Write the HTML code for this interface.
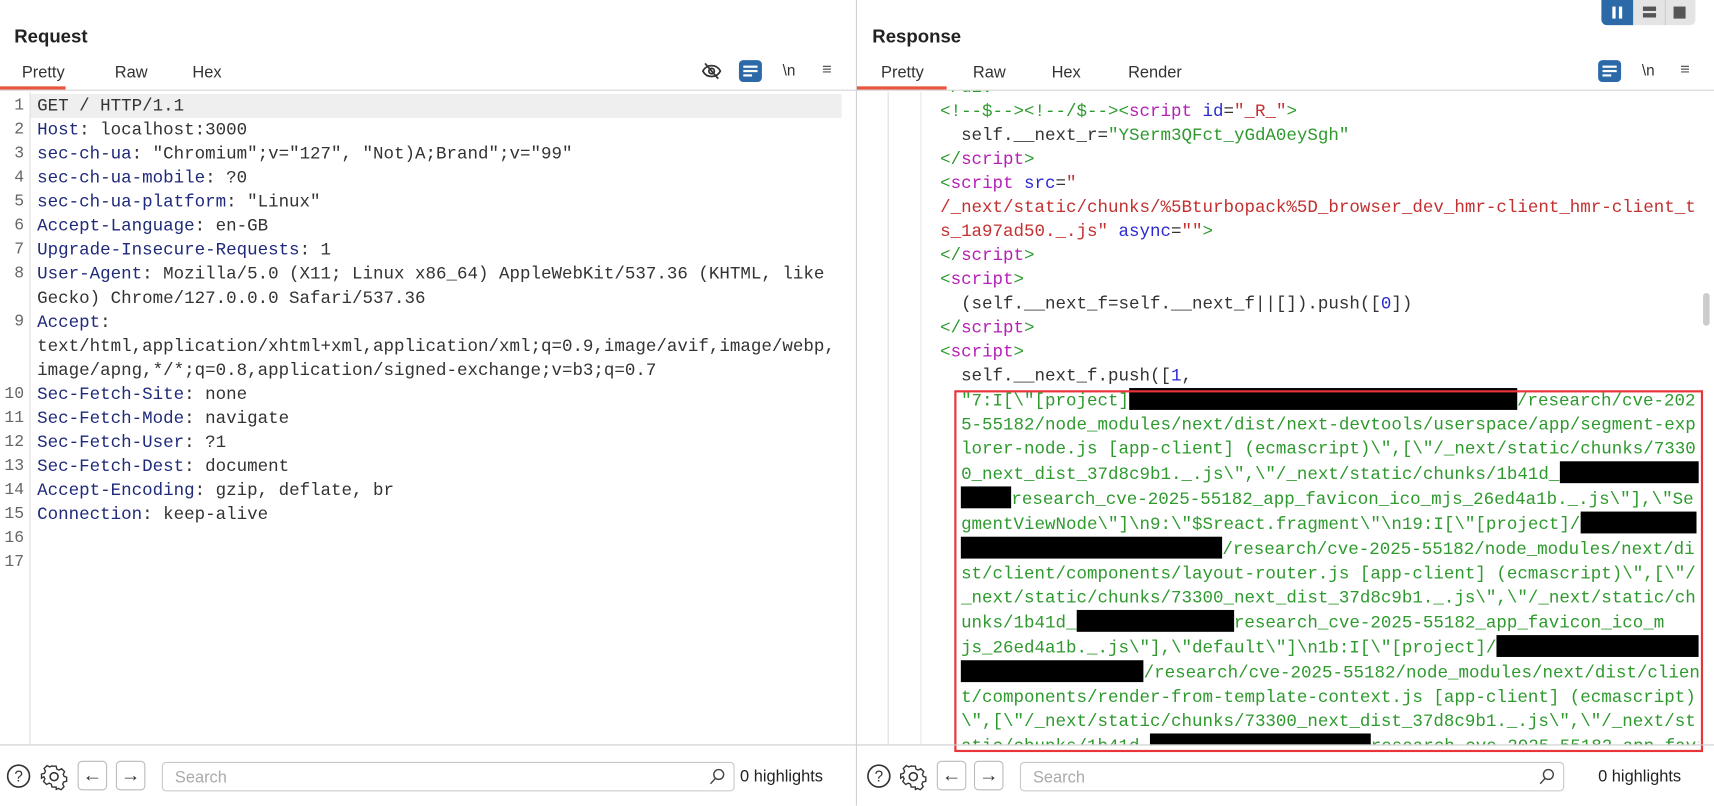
<!DOCTYPE html>
<html><head><meta charset="utf-8"><style>
*{margin:0;padding:0;box-sizing:border-box}
html,body{width:1714px;height:806px;overflow:hidden;background:#fff}
#w{width:1568px;height:737px;position:relative;transform:scale(1.09311);transform-origin:0 0;font-family:"Liberation Sans",sans-serif;color:#222}
.abs{position:absolute}
.mono{font-family:"Liberation Mono",monospace;font-size:16px;white-space:pre;line-height:22px;color:#333}
.k{color:#1f2a7a}
.g{color:#2e9a2e}
.p{color:#b51fb5}
.b{color:#2a2ad0}
.r{color:#c23030}
.x{display:inline-block;background:#000;height:20px;vertical-align:-4px}
.title{font-size:17px;font-weight:bold;color:#222}
.tab{font-size:15px;color:#333}
.ln{position:absolute;left:0;width:22px;text-align:right;font-family:"Liberation Mono",monospace;font-size:15px;color:#666;line-height:22px}
.sbox{position:absolute;height:27px;border:1px solid #c8c8c8;border-radius:4px;font-size:15px;color:#aaa;padding:5px 11px}
.nb{position:absolute;width:27px;height:27px;border:1px solid #bbb;border-radius:4px;font-size:18px;text-align:center;line-height:24px;color:#333}
</style></head><body><div id="w">

<div class="abs" style="left:783px;top:0;width:1px;height:737px;background:#d0d0d0"></div>

<!-- LEFT -->
<div class="abs title" style="left:13px;top:24px">Request</div>
<div class="abs tab" style="left:20px;top:58px">Pretty</div>
<div class="abs tab" style="left:105px;top:58px">Raw</div>
<div class="abs tab" style="left:176px;top:58px">Hex</div>
<div class="abs" style="left:0;top:79px;width:60px;height:3px;background:#e8553e"></div>
<div class="abs" style="left:0;top:82px;width:783px;height:1px;background:#d5d5d5"></div>
<svg class="abs" style="left:642px;top:56px" width="18" height="18" viewBox="0 0 18 18"><path d="M1 9c2-4 5-5 8-5s6 1 8 5c-2 4-5 5-8 5s-6-1-8-5z" fill="none" stroke="#333" stroke-width="1.6"/><circle cx="9" cy="9" r="2.5" fill="none" stroke="#333" stroke-width="1.6"/><path d="M3 2l12 14" stroke="#333" stroke-width="1.6"/></svg>
<div class="abs" style="left:676px;top:55px;width:21px;height:20px;background:#2c69a8;border-radius:4px"><div style="position:absolute;left:4px;top:5px;width:13px;height:2px;background:#fff"></div><div style="position:absolute;left:4px;top:9px;width:13px;height:2px;background:#fff"></div><div style="position:absolute;left:4px;top:13px;width:8px;height:2px;background:#fff"></div></div>
<div class="abs" style="left:716px;top:56px;font-size:14px;color:#333">\n</div>
<div class="abs" style="left:752px;top:55px;font-size:15px;color:#555">&#8801;</div>

<div class="abs" style="left:27px;top:84px;width:1px;height:597px;background:#ddd"></div>
<div class="abs" style="left:28px;top:86px;width:742px;height:22px;background:#efefef"></div>
<div class="abs" style="left:0;top:86px;width:22px">
<div class="ln" style="top:0">1</div><div class="ln" style="top:22px">2</div><div class="ln" style="top:44px">3</div><div class="ln" style="top:66px">4</div><div class="ln" style="top:88px">5</div><div class="ln" style="top:110px">6</div><div class="ln" style="top:132px">7</div><div class="ln" style="top:154px">8</div><div class="ln" style="top:198px">9</div><div class="ln" style="top:264px">10</div><div class="ln" style="top:286px">11</div><div class="ln" style="top:308px">12</div><div class="ln" style="top:330px">13</div><div class="ln" style="top:352px">14</div><div class="ln" style="top:374px">15</div><div class="ln" style="top:396px">16</div><div class="ln" style="top:418px">17</div>
</div>
<div class="abs mono" style="left:34px;top:86px">GET / HTTP/1.1
<span class="k">Host</span>: localhost:3000
<span class="k">sec-ch-ua</span>: "Chromium";v="127", "Not)A;Brand";v="99"
<span class="k">sec-ch-ua-mobile</span>: ?0
<span class="k">sec-ch-ua-platform</span>: "Linux"
<span class="k">Accept-Language</span>: en-GB
<span class="k">Upgrade-Insecure-Requests</span>: 1
<span class="k">User-Agent</span>: Mozilla/5.0 (X11; Linux x86_64) AppleWebKit/537.36 (KHTML, like
Gecko) Chrome/127.0.0.0 Safari/537.36
<span class="k">Accept</span>:
text/html,application/xhtml+xml,application/xml;q=0.9,image/avif,image/webp,
image/apng,*/*;q=0.8,application/signed-exchange;v=b3;q=0.7
<span class="k">Sec-Fetch-Site</span>: none
<span class="k">Sec-Fetch-Mode</span>: navigate
<span class="k">Sec-Fetch-User</span>: ?1
<span class="k">Sec-Fetch-Dest</span>: document
<span class="k">Accept-Encoding</span>: gzip, deflate, br
<span class="k">Connection</span>: keep-alive</div>

<div class="abs" style="left:0;top:681px;width:783px;height:1px;background:#ccc"></div>
<svg class="abs" style="left:5px;top:698px" width="24" height="24" viewBox="0 0 24 24"><circle cx="12" cy="12" r="10" fill="none" stroke="#333" stroke-width="1.5"/><text x="12" y="17" font-size="14" text-anchor="middle" font-family="Liberation Sans" fill="#333">?</text></svg>
<svg class="abs" style="left:37px;top:698px" width="25" height="25" viewBox="0 0 24 24"><path d="M10 2h4l.6 2.8 2 1 2.6-1.3 2.8 2.8-1.3 2.6 1 2 2.3.6v4l-2.8.6-1 2 1.3 2.6-2.8 2.8-2.6-1.3-2 1L14 22h-4l-.6-2.8-2-1-2.6 1.3-2.8-2.8 1.3-2.6-1-2L0 13.5v-4l2.8-.6 1-2L2.5 4.3 5.3 1.5l2.6 1.3 2-1z" fill="none" stroke="#333" stroke-width="1.3" transform="scale(.92) translate(1 1)"/><circle cx="12" cy="12" r="3.5" fill="none" stroke="#333" stroke-width="1.4"/></svg>
<div class="nb" style="left:71px;top:696px">&#8592;</div>
<div class="nb" style="left:106px;top:696px">&#8594;</div>
<div class="sbox" style="left:148px;top:697px;width:524px">Search</div>
<svg class="abs" style="left:648px;top:702px" width="16" height="16" viewBox="0 0 16 16"><circle cx="9.5" cy="6.5" r="4.5" fill="none" stroke="#444" stroke-width="1.3"/><path d="M6.5 10L2 15" stroke="#444" stroke-width="1.3"/></svg>
<div class="abs" style="left:677px;top:702px;font-size:15px;color:#222">0 highlights</div>

<!-- RIGHT -->
<div class="abs" style="left:1465px;top:0;width:86px;height:23px;background:#e4e4e4;border-radius:0 0 5px 5px"></div>
<div class="abs" style="left:1465px;top:0;width:29px;height:23px;background:#2c69a8;border-radius:0 0 0 5px"><div style="position:absolute;left:10px;top:6px;width:3px;height:11px;background:#fff"></div><div style="position:absolute;left:16px;top:6px;width:3px;height:11px;background:#fff"></div></div>
<div class="abs" style="left:1503px;top:6px;width:12px;height:4px;background:#555"></div><div class="abs" style="left:1503px;top:12px;width:12px;height:4px;background:#555"></div>
<div class="abs" style="left:1523px;top:0;width:1px;height:23px;background:#ccc"></div>
<div class="abs" style="left:1531px;top:6px;width:11px;height:11px;background:#555"></div>

<div class="abs title" style="left:798px;top:24px">Response</div>
<div class="abs tab" style="left:806px;top:58px">Pretty</div>
<div class="abs tab" style="left:890px;top:58px">Raw</div>
<div class="abs tab" style="left:962px;top:58px">Hex</div>
<div class="abs tab" style="left:1032px;top:58px">Render</div>
<div class="abs" style="left:784px;top:79px;width:82px;height:3px;background:#e8553e"></div>
<div class="abs" style="left:784px;top:82px;width:784px;height:1px;background:#d5d5d5"></div>
<div class="abs" style="left:1462px;top:55px;width:21px;height:20px;background:#2c69a8;border-radius:4px"><div style="position:absolute;left:4px;top:5px;width:13px;height:2px;background:#fff"></div><div style="position:absolute;left:4px;top:9px;width:13px;height:2px;background:#fff"></div><div style="position:absolute;left:4px;top:13px;width:8px;height:2px;background:#fff"></div></div>
<div class="abs" style="left:1502px;top:56px;font-size:14px;color:#333">\n</div>
<div class="abs" style="left:1537px;top:55px;font-size:15px;color:#555">&#8801;</div>

<div class="abs" style="left:812px;top:84px;width:1px;height:597px;background:#ddd"></div>
<div class="abs" style="left:842px;top:84px;width:1px;height:597px;background:#e6e6e6"></div>
<div class="abs" style="left:1558px;top:268px;width:6px;height:30px;background:#ccc;border-radius:3px"></div>

<div class="abs" style="left:784px;top:83px;width:770px;height:598px;overflow:hidden">
<div class="abs mono" style="left:76px;top:-14px"><span class="g">&lt;/div&gt;</span>
<span class="g">&lt;!--$--&gt;&lt;!--/$--&gt;</span><span class="g">&lt;</span><span class="p">script</span> <span class="b">id</span>=<span class="r">"_R_"</span><span class="g">&gt;</span>
  self.__next_r=<span class="g">"YSerm3QFct_yGdA0eySgh"</span>
<span class="g">&lt;/</span><span class="p">script</span><span class="g">&gt;</span>
<span class="g">&lt;</span><span class="p">script</span> <span class="b">src</span>=<span class="r">"</span>
<span class="r">/_next/static/chunks/%5Bturbopack%5D_browser_dev_hmr-client_hmr-client_t</span>
<span class="r">s_1a97ad50._.js"</span> <span class="b">async</span>=<span class="r">""</span><span class="g">&gt;</span>
<span class="g">&lt;/</span><span class="p">script</span><span class="g">&gt;</span>
<span class="g">&lt;</span><span class="p">script</span><span class="g">&gt;</span>
  (self.__next_f=self.__next_f||[]).push([<span class="b">0</span>])
<span class="g">&lt;/</span><span class="p">script</span><span class="g">&gt;</span>
<span class="g">&lt;</span><span class="p">script</span><span class="g">&gt;</span>
  self.__next_f.push([<span class="b">1</span>,
<span class="g">  "7:I[\"[project]<span class="x" style="width:355px"></span>/research/cve-202
  5-55182/node_modules/next/dist/next-devtools/userspace/app/segment-exp
  lorer-node.js [app-client] (ecmascript)\",[\"/_next/static/chunks/7330
  0_next_dist_37d8c9b1._.js\",\"/_next/static/chunks/1b41d_<span class="x" style="width:132px"></span>
  <span class="x" style="width:46px"></span>research_cve-2025-55182_app_favicon_ico_mjs_26ed4a1b._.js\"],\"Se
  gmentViewNode\"]\n9:\"$Sreact.fragment\"\n19:I[\"[project]/<span class="x" style="width:106px"></span>
  <span class="x" style="width:239px"></span>/research/cve-2025-55182/node_modules/next/di
  st/client/components/layout-router.js [app-client] (ecmascript)\",[\"/
  _next/static/chunks/73300_next_dist_37d8c9b1._.js\",\"/_next/static/ch
  unks/1b41d_<span class="x" style="width:144px"></span>research_cve-2025-55182_app_favicon_ico_m
  js_26ed4a1b._.js\"],\"default\"]\n1b:I[\"[project]/<span class="x" style="width:185px"></span>
  <span class="x" style="width:167px"></span>/research/cve-2025-55182/node_modules/next/dist/clien
  t/components/render-from-template-context.js [app-client] (ecmascript)
  \",[\"/_next/static/chunks/73300_next_dist_37d8c9b1._.js\",\"/_next/st
  atic/chunks/1b41d_<span class="x" style="width:202px"></span>research_cve-2025-55182_app_favico</span></div>
</div>
<div class="abs" style="left:873px;top:357px;width:685px;height:331px;border:2px solid #e8353a"></div>

<div class="abs" style="left:784px;top:681px;width:784px;height:1px;background:#ccc"></div>
<svg class="abs" style="left:792px;top:698px" width="24" height="24" viewBox="0 0 24 24"><circle cx="12" cy="12" r="10" fill="none" stroke="#333" stroke-width="1.5"/><text x="12" y="17" font-size="14" text-anchor="middle" font-family="Liberation Sans" fill="#333">?</text></svg>
<svg class="abs" style="left:823px;top:698px" width="25" height="25" viewBox="0 0 24 24"><path d="M10 2h4l.6 2.8 2 1 2.6-1.3 2.8 2.8-1.3 2.6 1 2 2.3.6v4l-2.8.6-1 2 1.3 2.6-2.8 2.8-2.6-1.3-2 1L14 22h-4l-.6-2.8-2-1-2.6 1.3-2.8-2.8 1.3-2.6-1-2L0 13.5v-4l2.8-.6 1-2L2.5 4.3 5.3 1.5l2.6 1.3 2-1z" fill="none" stroke="#333" stroke-width="1.3" transform="scale(.92) translate(1 1)"/><circle cx="12" cy="12" r="3.5" fill="none" stroke="#333" stroke-width="1.4"/></svg>
<div class="nb" style="left:857px;top:696px">&#8592;</div>
<div class="nb" style="left:891px;top:696px">&#8594;</div>
<div class="sbox" style="left:933px;top:697px;width:498px">Search</div>
<svg class="abs" style="left:1407px;top:702px" width="16" height="16" viewBox="0 0 16 16"><circle cx="9.5" cy="6.5" r="4.5" fill="none" stroke="#444" stroke-width="1.3"/><path d="M6.5 10L2 15" stroke="#444" stroke-width="1.3"/></svg>
<div class="abs" style="left:1462px;top:702px;font-size:15px;color:#222">0 highlights</div>
</div></body></html>
